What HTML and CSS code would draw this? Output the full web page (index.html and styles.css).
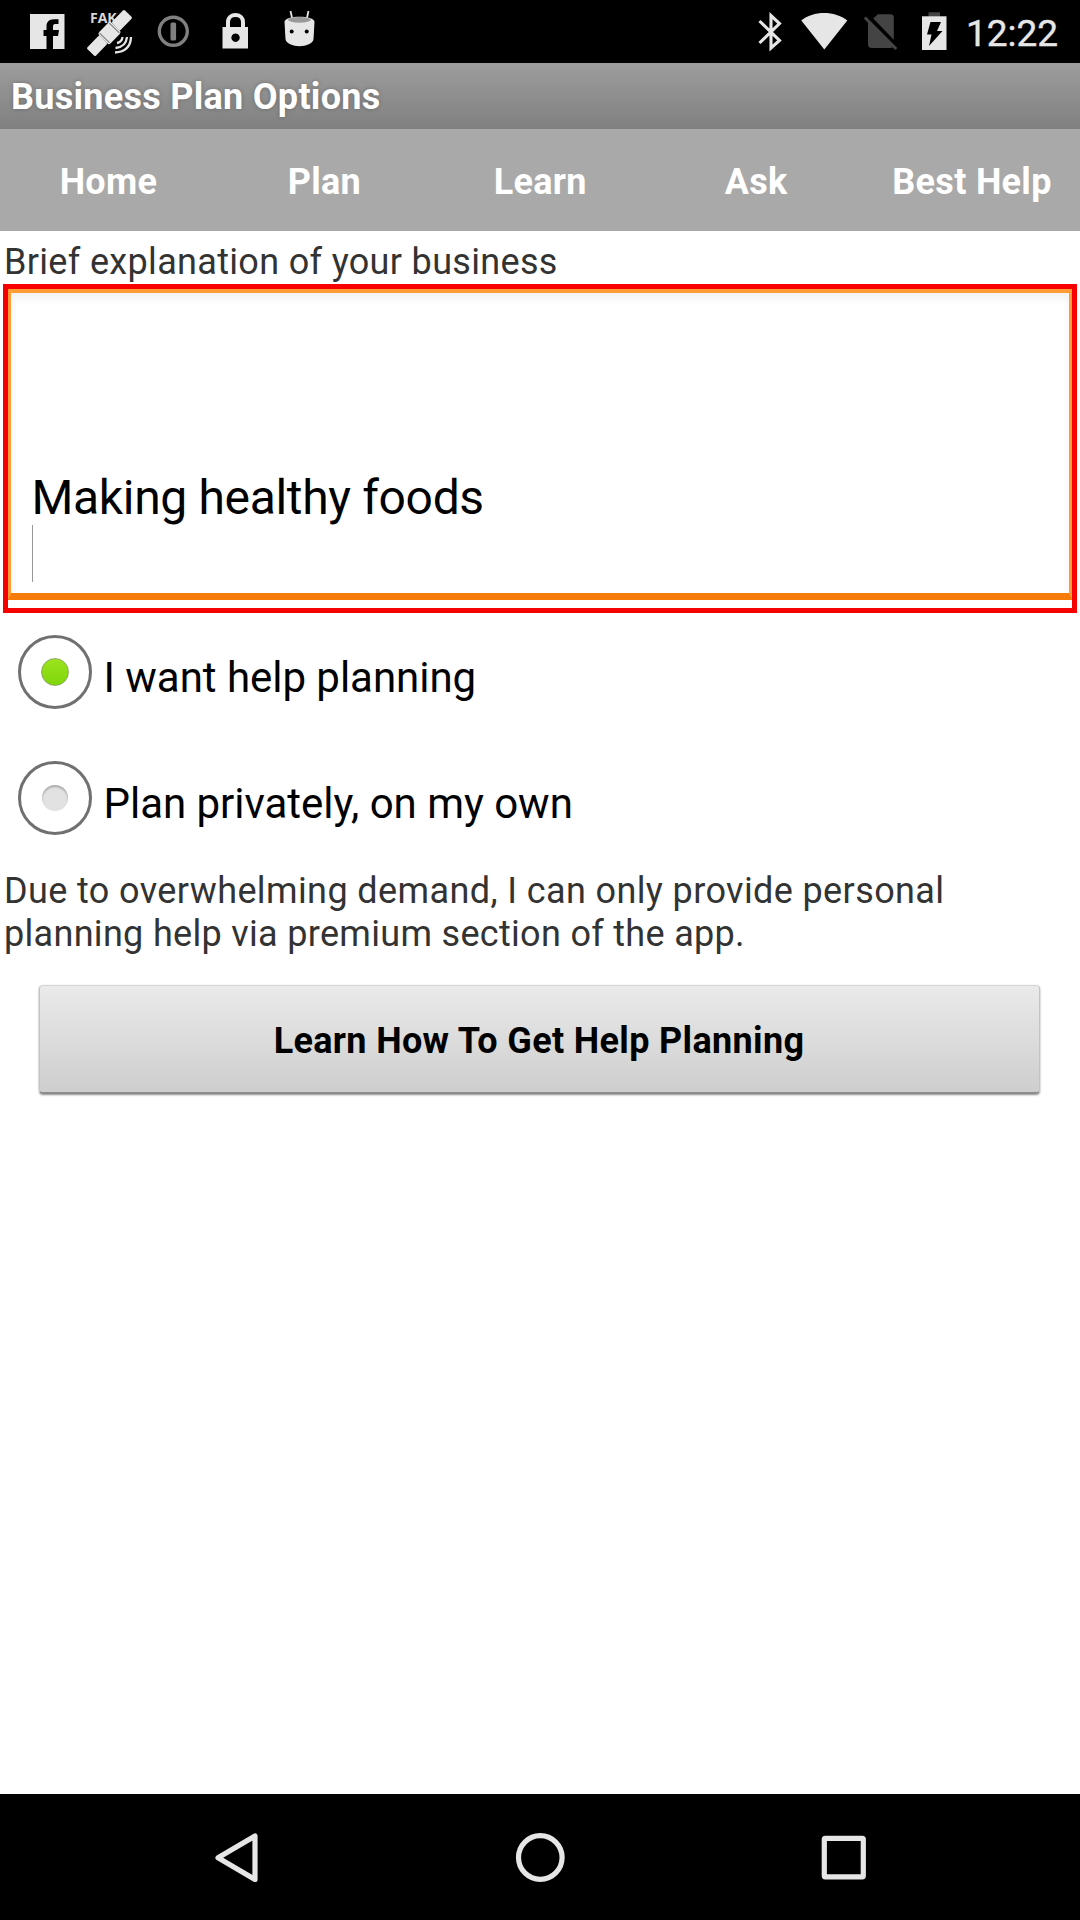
FILE: index.html
```html
<!DOCTYPE html>
<html lang="en">
<head>
<meta charset="utf-8">
<title>Business Plan Options</title>
<link rel="stylesheet" href="styles.css">
</head>
<body>
<div class="screen">
  <header class="status">
    <div class="status-group">
      <svg width="56" height="63" viewBox="24 0 56 63"><path fill="#e6e6e6" d="M30 14h34.500v35H53V36h5l1-6h-6v-3.500c0-2 1-2.500 3-2.500h2.500v-4.800H54c-5 0-7.500 2.800-7.500 7V30h-3v6h3v13H30z"/></svg>
      <svg width="68" height="63" viewBox="80 0 68 63">
        <text class="fake" x="90" y="23">FAK</text>
        <g transform="translate(109.500 33) rotate(-46)" fill="#e6e6e6">
          <rect x="-27" y="-6" width="18" height="12" rx="1.500"/><rect x="9" y="-6" width="18" height="12" rx="1.500"/>
          <rect x="-9" y="-8" width="18" height="16" rx="2.500"/><path d="M-7-7v14M7-7v14" stroke="#777" stroke-width="1"/>
        </g>
        <path d="M117 43q5-1 5.500-6M115.500 48q10.500-1 11.500-11M115 52.500q15.500-1 16-15.500" fill="none" stroke="#e6e6e6" stroke-width="2.300"/>
      </svg>
      <svg width="56" height="63" viewBox="148 0 56 63"><circle cx="173.300" cy="31.300" r="14" fill="none" stroke="#808080" stroke-width="3.400"/><rect x="170.500" y="22.500" width="5.600" height="18" rx="1.500" fill="#808080"/></svg>
      <svg width="60" height="63" viewBox="204 0 60 63"><path fill="none" stroke="#e6e6e6" stroke-width="4" d="M228 29v-7c0-9.500 15-9.500 15 0v7"/><path fill="#e6e6e6" fill-rule="evenodd" d="M222.500 27h25.500v21.500h-25.500zM235.500 33.500a4.200 4.200 0 1 0 .1 0z"/></svg>
      <svg width="66" height="63" viewBox="264 0 66 63"><path d="M290.500 11l2 9M308.500 11l-2 9" stroke="#e6e6e6" stroke-width="1.800"/><path fill="#e6e6e6" d="M284.500 22C284.500 15 314.500 15 314.500 22L313.500 39C312.500 48.500 286.500 48.500 285.500 39z"/><ellipse cx="299.500" cy="19.800" rx="11.500" ry="2.900" fill="#999"/><circle cx="291.700" cy="31.500" r="2"/><circle cx="306.700" cy="31.500" r="2"/></svg>
    </div>
    <div class="status-group">
      <svg width="42" height="63" viewBox="750 0 42 63"><path fill="none" stroke="#e6e6e6" stroke-width="3.100" d="M759.500 21l20 19.500-8.500 7.500V15.500l8.500 8-20 19.500"/></svg>
      <svg width="64" height="63" viewBox="792 0 64 63"><path fill="#e6e6e6" d="M801.300 20.500C813 10.500 835 10.500 847.300 20.500L824.300 49.500z"/></svg>
      <svg width="54" height="63" viewBox="856 0 54 63"><path fill="#444" d="M868 23l10-8.700h12.500q3.300 0 3.300 3.300v27q0 3.400-3.300 3.400H871.500q-3.500 0-3.500-3.400z"/><path d="M867 15l30 31" stroke="#000" stroke-width="4"/><path d="M864.800 17.500l31.500 31.500" stroke="#444" stroke-width="3"/></svg>
      <svg width="50" height="63" viewBox="910 0 50 63"><path fill="#444" d="M928.500 12.300h11.500v5h-11.500z"/><path fill="#e6e6e6" d="M922 16.300h24.500v33.700H922z"/><path d="M930.500 22h10.500l-4 9h5.500l-13.500 15 2.500-11.500h-4.500z"/></svg>
      <span class="clock">12:22</span>
    </div>
  </header>
  <h1 class="title">Business Plan Options</h1>
  <nav class="tabs"><span>Home</span><span>Plan</span><span>Learn</span><span>Ask</span><span>Best Help</span></nav>
  <main class="content">
    <p class="label">Brief explanation of your business</p>
    <div class="focus">
      <div class="field"><p>Making healthy foods</p><p class="line"><i class="caret"></i></p></div>
    </div>
    <div class="option"><span class="radio"><i class="dot dot-on"></i></span><span>I want help planning</span></div>
    <div class="option"><span class="radio"><i class="dot"></i></span><span>Plan privately, on my own</span></div>
    <p class="note">Due to overwhelming demand, I can only provide personal<br><span class="note-end">planning help via premium section of the app.</span></p>
    <button class="action" type="button">Learn How To Get Help Planning</button>
  </main>
  <footer class="navbar">
    <svg width="60" height="60" viewBox="206 1827 60 60"><path d="M255 1836v43.500L218 1857.700z"/></svg>
    <svg width="60" height="60" viewBox="510 1827 60 60"><circle cx="540.300" cy="1857.500" r="21.800"/></svg>
    <svg width="60" height="60" viewBox="814 1827 60 60"><rect x="824.300" y="1838.300" width="39" height="38.500" rx="1"/></svg>
  </footer>
</div>
</body>
</html>
```
FILE: styles.css
```css
* { box-sizing: border-box; }
body { margin: 0; background: #fff; font-family: Roboto, "Noto Sans", sans-serif; color: #000; }
p, h1 { margin: 0; }
svg { display: block; flex: none; }
.screen { width: 1080px; height: 1920px; display: flex; flex-direction: column; overflow: hidden; }

.status { height: 63px; flex: none; background: #000; display: flex; justify-content: space-between; padding: 0 0 0 24px; }
.status-group { display: flex; align-items: center; }
.status-group:last-child { width: 330px; }
.clock { color: #e6e6e6; font-size: 37px; line-height: 63px; padding: 3px 0 0 6px; -webkit-text-stroke: .4px #e6e6e6; }
.fake { font: bold 14px "Open Sans", sans-serif; fill: #d8d8d8; }

.title { height: 66px; flex: none; padding: 1px 0 0 11px; background: linear-gradient(#9d9d9d, #808080); color: #fff; font-size: 36px; font-weight: 700; line-height: 66px; letter-spacing: .28px; text-shadow: 0 0 4px rgba(0, 0, 0, .25); }
.tabs { height: 102px; flex: none; display: grid; grid-template-columns: repeat(5, 1fr); background: #a9a9a9; color: #fff; font-size: 36px; font-weight: 700; line-height: 103px; letter-spacing: .3px; padding: 2px 0 0 .5px; text-align: center; }

.content { flex: 1; display: flex; flex-direction: column; }
.label, .note { padding-left: 4px; color: #333; font-size: 36px; line-height: 43px; letter-spacing: .33px; }
.label { padding-top: 10px; height: 53px; }
.focus { height: 329px; margin: 0 3px; flex: none; border: 5px solid #f60000; }
.field { height: 311px; display: flex; flex-direction: column; justify-content: flex-end; padding: 0 0 10px 20.5px; font-size: 48px; line-height: 57px; letter-spacing: -.34px; border: solid #ff9c35; border-width: 4px 3px 7px; border-bottom-color: #f77c0c; box-shadow: inset 0 5px 9px rgba(0, 0, 0, .06); }
.line { height: 57px; }
.caret { display: block; width: 1px; height: 57px; margin-top: -1px; background: #999; }
.option { height: 126px; flex: none; display: flex; gap: 12px; padding-left: 17.5px; font-size: 42px; line-height: 49px; letter-spacing: -.03px; }
.option > span:last-child { padding-top: 40px; }
.radio { width: 74px; height: 74px; margin-top: 21.5px; border: 3px solid #707070; border-radius: 50%; display: flex; align-items: center; justify-content: center; background: #fff; }
.dot { width: 26px; height: 26px; border-radius: 50%; background: #e2e2e2; box-shadow: inset 0 2px 2px #aaa; }
.dot-on { width: 28px; height: 28px; background: linear-gradient(#9be31e, #80d60a); border: 1px solid #91a86b; box-shadow: none; }
.note { padding-top: 5px; letter-spacing: .39px; }
.note-end { letter-spacing: .31px; }
.action { width: 1001px; height: 109px; margin: 29px 0 0 39px; flex: none; padding: 4px 1px 0 0; border: 1px solid #c3c3c3; border-top-color: #d5d5d5; border-bottom: 2px solid #8d8d8d; border-radius: 4px; background: linear-gradient(#eaeaea, #cecece); box-shadow: 0 1px 2px rgba(0, 0, 0, .45); color: #000; font: 700 36px/102px Roboto, sans-serif; letter-spacing: .34px; }

.navbar { height: 126px; flex: none; background: #000; display: flex; align-items: center; justify-content: center; gap: 244px; }
.navbar svg { fill: none; stroke: #e6e6e6; stroke-width: 5.2; stroke-linejoin: round; }
```
